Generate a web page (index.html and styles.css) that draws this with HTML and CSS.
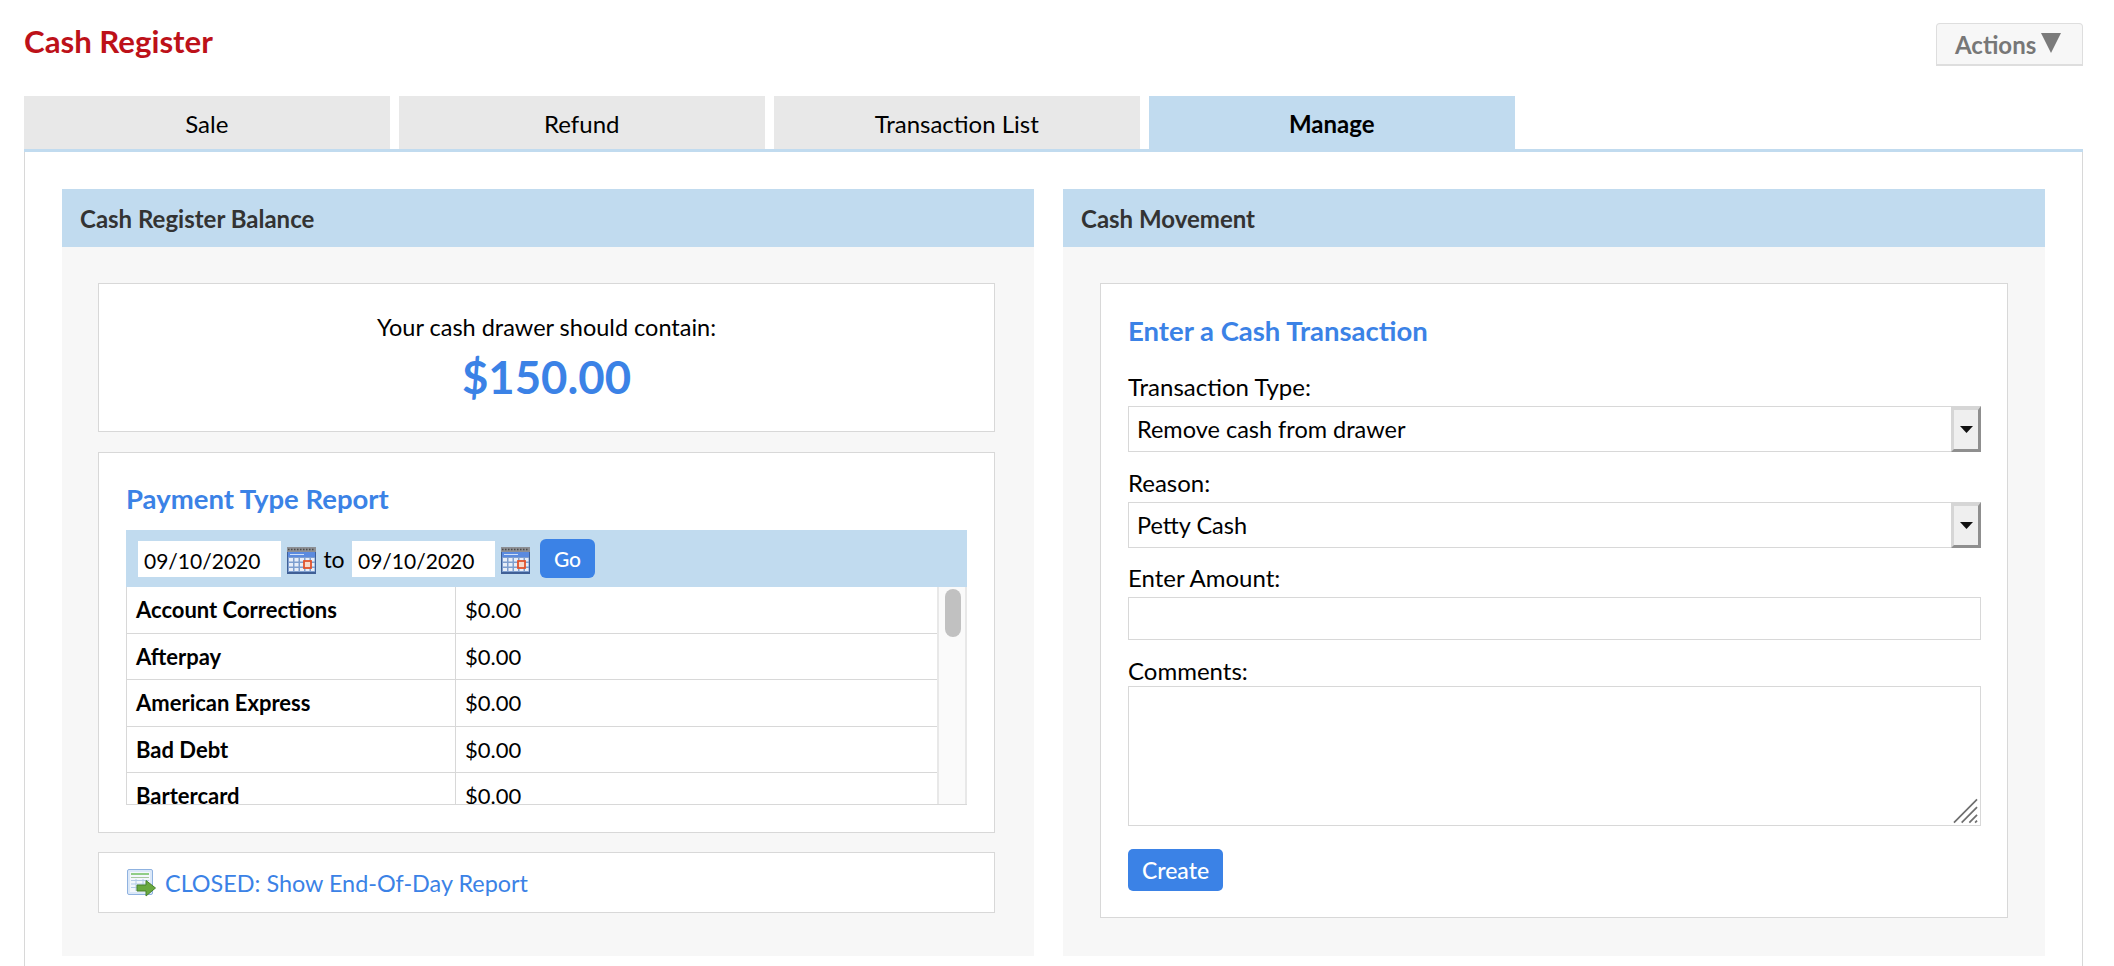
FILE: index.html
```html
<!DOCTYPE html>
<html lang="en">
<head>
<meta charset="utf-8">
<title>Cash Register</title>
<link rel="stylesheet" href="styles.css">
</head>
<body>
<header class="top">
  <h1 class="page-title">Cash Register</h1>
  <button class="actions" type="button">Actions
    <svg class="actions-arrow" width="20" height="20" viewBox="0 0 20 20"><path d="M0 0H20L10 20Z" fill="#7b7b7b"/></svg>
  </button>
</header>
<nav class="tabs">
  <a class="tab">Sale</a>
  <a class="tab">Refund</a>
  <a class="tab">Transaction List</a>
  <a class="tab tab-active">Manage</a>
</nav>
<main class="content">
  <section class="panel">
    <h2 class="panel-head">Cash Register Balance</h2>
    <div class="panel-body panel-body-left">
      <div class="card balance">
        <p class="balance-label">Your cash drawer should contain:</p>
        <p class="balance-value">$150.00</p>
      </div>
      <div class="card report">
        <h3 class="card-title">Payment Type Report</h3>
        <div class="report-box">
          <div class="date-bar">
            <input class="date-input" type="text" value="09/10/2020">
            <svg class="cal" width="29" height="27" viewBox="0 0 29 27">
              <rect x="0" y="0" width="29" height="27" fill="#3f5f96"/>
              <rect x="0" y="0" width="29" height="5" fill="#8d8f94"/>
              <path d="M1 2.500H28" stroke="#4a4a4a" stroke-width="1.500" stroke-dasharray="1.500 1.500"/>
              <rect x="1" y="5" width="27" height="5" fill="#5b8ade"/>
              <path d="M3 7.500H17" stroke="#cfe0f8" stroke-width="1"/>
              <rect x="1" y="10" width="27" height="15" fill="#7f9fcf"/>
              <g fill="#e8eef8">
                <rect x="2" y="11" width="4" height="3.500"/><rect x="7.500" y="11" width="4" height="3.500"/><rect x="13" y="11" width="4" height="3.500"/><rect x="18.500" y="11" width="4" height="3.500"/><rect x="24" y="11" width="3.500" height="3.500"/>
                <rect x="2" y="16" width="4" height="3.500"/><rect x="7.500" y="16" width="4" height="3.500"/><rect x="13" y="16" width="4" height="3.500"/><rect x="24" y="16" width="3.500" height="3.500"/>
                <rect x="2" y="21" width="4" height="3"/><rect x="7.500" y="21" width="4" height="3"/><rect x="13" y="21" width="4" height="3"/><rect x="18.500" y="21" width="4" height="3"/><rect x="24" y="21" width="3.500" height="3"/>
              </g>
              <rect x="17" y="14" width="7" height="7" fill="#f6d9cc" stroke="#e2512c" stroke-width="1.800"/>
            </svg>
            <span class="date-to">to</span>
            <input class="date-input" type="text" value="09/10/2020">
            <svg class="cal" width="29" height="27" viewBox="0 0 29 27">
              <rect x="0" y="0" width="29" height="27" fill="#3f5f96"/>
              <rect x="0" y="0" width="29" height="5" fill="#8d8f94"/>
              <path d="M1 2.500H28" stroke="#4a4a4a" stroke-width="1.500" stroke-dasharray="1.500 1.500"/>
              <rect x="1" y="5" width="27" height="5" fill="#5b8ade"/>
              <path d="M3 7.500H17" stroke="#cfe0f8" stroke-width="1"/>
              <rect x="1" y="10" width="27" height="15" fill="#7f9fcf"/>
              <g fill="#e8eef8">
                <rect x="2" y="11" width="4" height="3.500"/><rect x="7.500" y="11" width="4" height="3.500"/><rect x="13" y="11" width="4" height="3.500"/><rect x="18.500" y="11" width="4" height="3.500"/><rect x="24" y="11" width="3.500" height="3.500"/>
                <rect x="2" y="16" width="4" height="3.500"/><rect x="7.500" y="16" width="4" height="3.500"/><rect x="13" y="16" width="4" height="3.500"/><rect x="24" y="16" width="3.500" height="3.500"/>
                <rect x="2" y="21" width="4" height="3"/><rect x="7.500" y="21" width="4" height="3"/><rect x="13" y="21" width="4" height="3"/><rect x="18.500" y="21" width="4" height="3"/><rect x="24" y="21" width="3.500" height="3"/>
              </g>
              <rect x="17" y="14" width="7" height="7" fill="#f6d9cc" stroke="#e2512c" stroke-width="1.800"/>
            </svg>
            <button class="btn btn-go" type="button">Go</button>
          </div>
          <div class="table-wrap">
            <div class="table-clip">
              <div class="row"><div class="cell cell-name">Account Corrections</div><div class="cell">$0.00</div></div>
              <div class="row"><div class="cell cell-name">Afterpay</div><div class="cell">$0.00</div></div>
              <div class="row"><div class="cell cell-name">American Express</div><div class="cell">$0.00</div></div>
              <div class="row"><div class="cell cell-name">Bad Debt</div><div class="cell">$0.00</div></div>
              <div class="row"><div class="cell cell-name">Bartercard</div><div class="cell">$0.00</div></div>
            </div>
            <div class="scroll-track"><div class="scroll-thumb"></div></div>
          </div>
        </div>
      </div>
      <div class="card eod">
        <svg class="eod-icon" width="29" height="29" viewBox="0 0 29 29">
          <rect x="0.500" y="0.500" width="25" height="25" rx="1.500" fill="#dbe8f8" stroke="#8fb2e0"/>
          <rect x="3" y="3" width="20" height="20" fill="#f3f7fc"/>
          <path d="M4 5H22" stroke="#6fbf5f" stroke-width="1.500"/>
          <path d="M4 8.500H22" stroke="#a9c7a0" stroke-width="1"/>
          <path d="M4 11.500H22M4 15H22M4 18.500H22M9 10V22M16 10V22" stroke="#b4cbe8" stroke-width="1"/>
          <path d="M10 16H19V11.500L28.500 19L19 27V22H10Z" fill="#69a83f" stroke="#47802c"/>
        </svg>
        <a class="eod-link">CLOSED: Show End-Of-Day Report</a>
      </div>
    </div>
  </section>
  <section class="panel">
    <h2 class="panel-head">Cash Movement</h2>
    <div class="panel-body">
      <form class="card form-card">
        <h3 class="card-title form-title">Enter a Cash Transaction</h3>
        <label class="field-label label-type">Transaction Type:</label>
        <div class="select-wrap">
          <select class="select"><option>Remove cash from drawer</option></select>
          <span class="select-btn"><svg width="13" height="7" viewBox="0 0 13 7"><path d="M0 0H13L6.500 7Z" fill="#111"/></svg></span>
        </div>
        <label class="field-label label-reason">Reason:</label>
        <div class="select-wrap">
          <select class="select"><option>Petty Cash</option></select>
          <span class="select-btn"><svg width="13" height="7" viewBox="0 0 13 7"><path d="M0 0H13L6.500 7Z" fill="#111"/></svg></span>
        </div>
        <label class="field-label label-amount">Enter Amount:</label>
        <input class="amount" type="text">
        <label class="field-label label-comments">Comments:</label>
        <div class="textarea-wrap">
          <textarea class="comments"></textarea>
          <svg class="grip" width="25" height="26" viewBox="0 0 26 26"><path d="M1 25L25 1M9 25L25 9M17 25L25 17M23 25L25 23" stroke="#6f6f6f" stroke-width="1.800" fill="none"/></svg>
        </div>
        <button class="btn btn-create" type="button">Create</button>
      </form>
    </div>
  </section>
</main>
</body>
</html>
```

FILE: styles.css
```css
* { box-sizing: border-box; }
html, body { height: 966px; overflow: hidden; }
body {
  margin: 0;
  padding: 0 31px 0 24px;
  background: #fff;
  color: #000;
  font-family: Lato, "Open Sans", sans-serif;
  font-size: 22px;
}
.top {
  display: flex;
  justify-content: space-between;
  align-items: flex-start;
  height: 96px;
  padding-top: 23px;
}
.page-title {
  margin: 0;
  color: #bd1119;
  font-size: 31.200px;
  line-height: 36px;
  font-weight: 700;
}
.actions {
  display: flex;
  align-items: center;
  gap: 5px;
  width: 147px;
  height: 43px;
  padding: 0 0 0 18px;
  background: #f7f7f7;
  border: 1px solid #dedede;
  border-bottom-width: 2px;
  border-radius: 4px 4px 0 0;
  color: #777;
  font: 700 24px Lato, sans-serif;
}
.actions-arrow { margin-top: -2px; }
.tabs {
  display: flex;
  gap: 9.500px;
  border-bottom: 3px solid #c1dbef;
}
.tab {
  width: 365.500px;
  height: 53px;
  background: #e8e8e8;
  text-align: center;
  line-height: 56px;
  font-size: 24px;
}
.tab-active { background: #c1dbef; font-weight: 700; }
.content {
  display: grid;
  grid-template-columns: 972px 982px;
  column-gap: 29px;
  height: 814px;
  padding: 37px 37px 0;
  border-left: 1px solid #d8d8d8;
  border-right: 1px solid #d8d8d8;
  align-content: start;
}
.panel { background: #f7f7f7; height: 767px; }
.panel-head {
  margin: 0;
  height: 58px;
  padding-left: 18px;
  background: #c1dbef;
  color: #333;
  font-size: 24px;
  line-height: 60px;
  font-weight: 700;
}
.panel-body {
  display: flex;
  flex-direction: column;
  padding: 36px 37px;
}
.panel-body-left { padding-left: 36px; padding-right: 39px; }
.card {
  background: #fff;
  border: 1px solid #d8d8d8;
}
.balance {
  height: 149px;
  text-align: center;
  padding-top: 29px;
}
.balance-label { margin: 0; font-size: 23.500px; line-height: 28px; }
.balance-value {
  margin: 8px 0 0;
  color: #3b82e6;
  font-size: 45.500px;
  line-height: 56px;
  font-weight: 700;
}
.report {
  height: 381px;
  margin-top: 20px;
  padding: 28px 27px 0 27px;
}
.card-title {
  margin: 0;
  color: #3b82e6;
  font-size: 27.500px;
  line-height: 36px;
  font-weight: 700;
}
.report-box { margin-top: 13px; }
.date-bar {
  display: flex;
  align-items: center;
  height: 57px;
  padding-left: 12px;
  background: #c1dbef;
}
.date-input {
  width: 143px;
  height: 36px;
  padding: 3px 6px 0;
  background: #fff;
  border: 0;
  color: #000;
  font: 21px Lato, sans-serif;
}
.cal { margin: 4px 0 0 6px; }
.date-to { width: 36px; text-align: center; font-size: 23px; }
.btn {
  background: #3b82e6;
  border: 0;
  color: #fff;
  font-family: Lato, sans-serif;
  cursor: pointer;
}
.btn-go {
  width: 55px;
  height: 39px;
  margin-left: 10px;
  border-radius: 6px;
  font-size: 21px;
  font-weight: 500;
}
.table-wrap {
  display: flex;
  height: 218px;
  border-left: 1px solid #d8d8d8;
  border-bottom: 1px solid #d8d8d8;
  overflow: hidden;
}
.table-clip { width: 810px; overflow: hidden; }
.row {
  display: grid;
  grid-template-columns: 328px 1fr;
  height: 46.500px;
  border-bottom: 1px solid #d8d8d8;
  font-size: 22px;
}
.cell {
  padding-left: 9px;
  line-height: 46px;
}
.cell + .cell { border-left: 1px solid #d8d8d8; padding-left: 9px; }
.cell-name { font-weight: 700; }
.scroll-track {
  flex: 1;
  padding: 2px 0 0 6px;
  background: #fafafa;
  border-left: 2px solid #e8e8e8;
  border-right: 2px solid #e8e8e8;
}
.scroll-thumb {
  width: 16px;
  height: 48px;
  background: #c1c1c1;
  border-radius: 8px;
}
.eod {
  display: flex;
  align-items: center;
  gap: 9px;
  height: 61px;
  margin-top: 19px;
  padding-left: 28px;
}
.eod-icon { margin-top: 2px; }
.eod-link { color: #3b82e6; font-size: 23.400px; }
.form-card {
  display: flex;
  flex-direction: column;
  align-items: flex-start;
  height: 635px;
  padding: 29px 27px 0;
}
.field-label { font-size: 24px; line-height: 28px; }
.label-type { margin-top: 24px; }
.label-reason { margin-top: 17px; }
.label-amount { margin-top: 16px; }
.label-comments { margin-top: 17px; }
.select-wrap {
  display: flex;
  width: 853px;
  height: 46px;
  margin-top: 5px;
  background: #fff;
  border: 1px solid #d8d8d8;
  border-right: 0;
}
.select {
  flex: 1;
  height: 100%;
  padding: 0 8px;
  appearance: none;
  -webkit-appearance: none;
  background: #fff;
  border: 0;
  color: #000;
  font: 23.500px Lato, sans-serif;
}
.select-btn {
  display: flex;
  align-items: center;
  justify-content: center;
  width: 30px;
  margin: -1px 0;
  background: #efefef;
  border-style: solid;
  border-width: 4px 3px 3px 3px;
  border-color: #d6d6d6 #8f8f8f #8f8f8f #d6d6d6;
}
.amount {
  width: 853px;
  height: 43px;
  margin-top: 5px;
  background: #fff;
  border: 1px solid #d8d8d8;
}
.textarea-wrap {
  position: relative;
  width: 853px;
  height: 140px;
  margin-top: 1px;
}
.comments {
  display: block;
  width: 100%;
  height: 100%;
  resize: none;
  background: #fff;
  border: 1px solid #d8d8d8;
}
.grip { position: absolute; right: 3px; bottom: 2px; }
.btn-create {
  width: 95px;
  height: 42px;
  margin-top: 23px;
  border-radius: 5px;
  font-size: 23px;
  font-weight: 500;
}
```
